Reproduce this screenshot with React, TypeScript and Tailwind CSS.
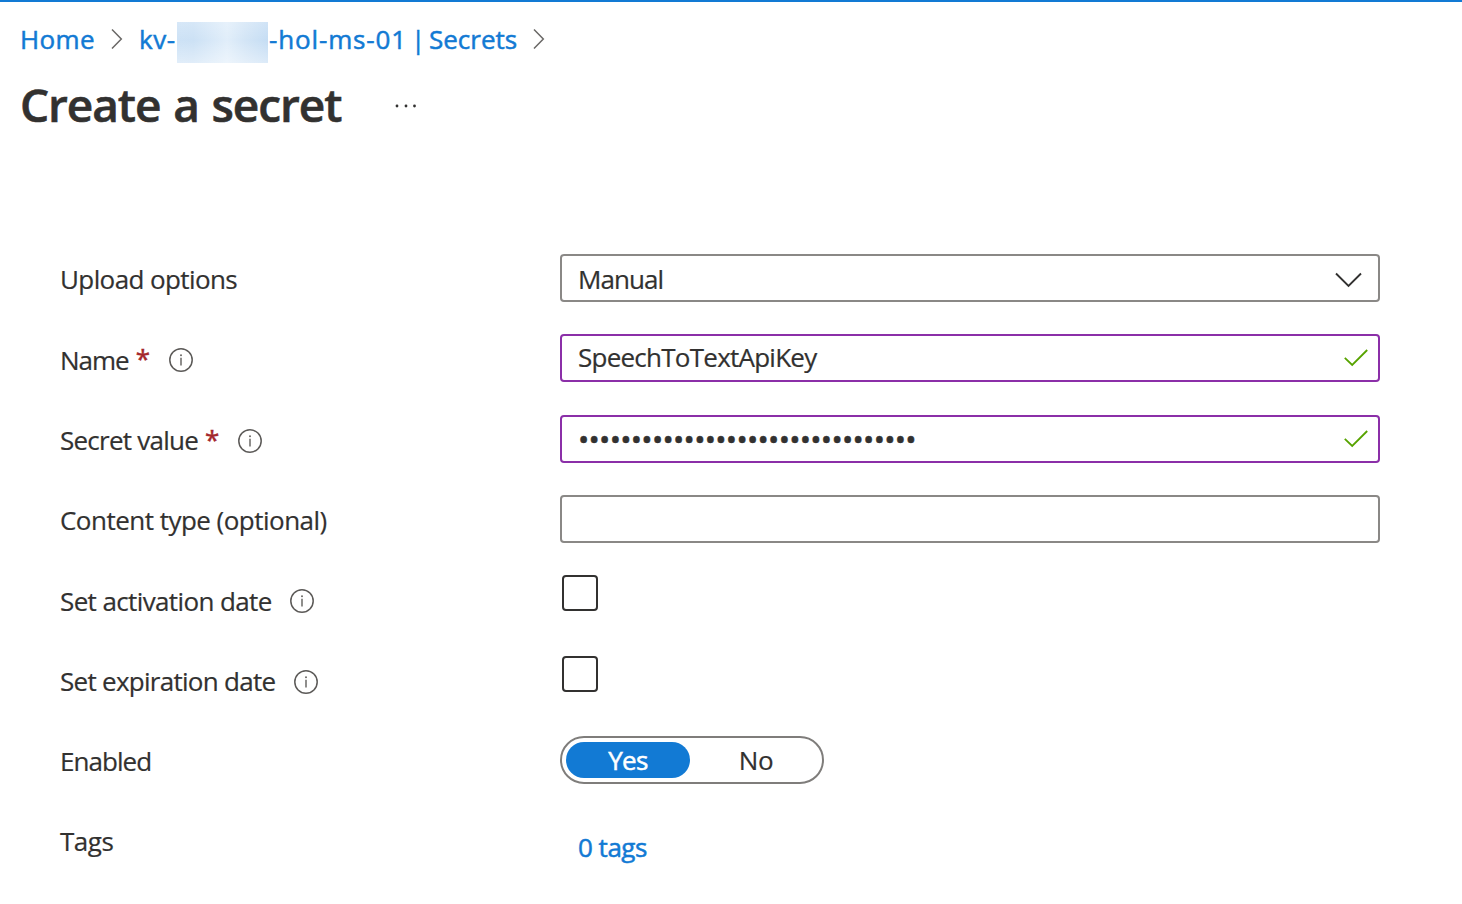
import type { ReactNode } from "react";

function ChevronRight() {
  return (
    <svg width="12" height="22" viewBox="0 0 12 22" fill="none" className="mb-0.5 shrink-0">
      <path d="M1 1.5 L10.3 11 L1 20.5" stroke="#6a6866" strokeWidth="1.5" />
    </svg>
  );
}

function Info() {
  return (
    <svg width="24" height="24" viewBox="0 0 24 24" fill="none" className="shrink-0">
      <circle cx="12" cy="12" r="11.2" stroke="#5c5a58" strokeWidth="1.5" />
      <path d="M12 9.8 V17.6" stroke="#6a6866" strokeWidth="1.5" />
      <circle cx="12" cy="7.2" r="1" fill="#6a6866" />
    </svg>
  );
}

function Check() {
  return (
    <svg width="24" height="18" viewBox="0 0 24 18" fill="none" className="shrink-0">
      <path d="M0.8 8.8 L8.2 16 L23.2 1" stroke="#57a300" strokeWidth="1.8" />
    </svg>
  );
}

function Row({ label, text, required, info, children }: {
  label: string;
  text: string;
  required?: boolean;
  info?: string;
  children: ReactNode;
}) {
  return (
    <div className="flex items-start">
      <div className="flex h-12 w-[500px] shrink-0 items-center">
        <span className={`leading-[46px] whitespace-pre ${text}`}>{label}</span>
        {required && <span className="pl-[7px] leading-[46px] text-[#a4262c] [-webkit-text-stroke:0.5px]">*</span>}
        {info && <span className={`pt-1 ${info}`}><Info /></span>}
      </div>
      {children}
    </div>
  );
}

const field = "flex h-12 w-[820px] items-center rounded-[4px] border-2 pl-4";

export default function App() {
  return (
    <div className="h-[904px] w-[1462px] overflow-hidden border-t-2 border-[#127ad4] bg-white font-['Open_Sans','Noto_Sans',sans-serif] text-[26px] text-[#323130] [-webkit-text-stroke:0.2px]">
      <nav className="flex h-[61px] items-center pt-[14px] pl-5 text-[#127ad4] [-webkit-text-stroke:0.5px]">
        <span className="w-[91px] tracking-[0.4px]">Home</span>
        <ChevronRight />
        <span className="ml-4 w-[38px] tracking-[0.5px]">kv-</span>
        <span className="mt-1.5 h-[41px] w-[91px] shrink-0 bg-[linear-gradient(180deg,#ffffff33_0%,#ffffff00_45%,#ffffff66_100%),linear-gradient(90deg,#cde2f6_0%,#cce1f5_18%,#e1eefa_55%,#d3e5f6_75%,#c5ddf4_100%)]" />
        <span className="flex w-[265px] pl-px whitespace-pre">
          <span className="w-[142px] tracking-[0.85px]">-hol-ms-01</span>
          <span className="w-[18px]">|</span>
          <span>Secrets</span>
        </span>
        <ChevronRight />
      </nav>
      <header className="flex h-[80px] items-center pt-[3px] pl-5">
        <h1 className="w-[375px] text-[46px] font-semibold whitespace-nowrap tracking-[-1.1px] [-webkit-text-stroke:0.6px] [word-spacing:2px]">Create a secret</h1>
        <svg width="22" height="4" viewBox="0 0 22 4" fill="#323130" className="mt-[3px]">
          <circle cx="2" cy="2" r="1.4" />
          <circle cx="11" cy="2" r="1.4" />
          <circle cx="19.5" cy="2" r="1.4" />
        </svg>
      </header>
      <main className="mt-[111px] grid grid-rows-[80px_81px_80px_80px_81px_80px_80px_48px] pl-[60px]">
        <Row label="Upload options" text="pt-0.5 tracking-[-0.6px]">
          <div className={`${field} justify-between border-[#8a8886] pr-4`}>
            <span className="pt-0.5 tracking-[-0.95px]">Manual</span>
            <svg width="27" height="16" viewBox="0 0 27 16" fill="none" className="mt-1">
              <path d="M1 1.5 L13.5 14 L26 1.5" stroke="#323130" strokeWidth="1.9" />
            </svg>
          </div>
        </Row>
        <Row label="Name" text="pt-1 tracking-[-1px]" required info="pl-[19px]">
          <div className={`${field} justify-between border-[#8b2fa8] pr-[10px]`}>
            <span className="pb-0.5 tracking-[-0.75px]">SpeechToTextApiKey</span>
            <Check />
          </div>
        </Row>
        <Row label="Secret value" text="pt-0.5 tracking-[-0.75px]" required info="pl-[19px]">
          <div className={`${field} justify-between border-[#8b2fa8] pr-[10px]`}>
            <span className="text-[30px] leading-10 tracking-[-0.72px] [-webkit-text-stroke:0.5px]">{"•".repeat(32)}</span>
            <Check />
          </div>
        </Row>
        <Row label="Content type (optional)" text="pt-0.5 tracking-[-0.52px]">
          <div className={`${field} border-[#8a8886]`} />
        </Row>
        <Row label="Set activation date" text="pt-1 tracking-[-0.62px]" info="pl-[18px]">
          <div className="ml-0.5 size-9 rounded-[4px] border-2 border-[#323130]" />
        </Row>
        <Row label="Set expiration date" text="pt-0.5 tracking-[-0.72px]" info="pl-[19px]">
          <div className="ml-0.5 size-9 rounded-[4px] border-2 border-[#323130]" />
        </Row>
        <Row label="Enabled" text="pt-0.5 tracking-[-0.95px]">
          <div className="flex h-12 w-[264px] items-center rounded-full border-2 border-[#7f7d7b] pl-1 leading-9">
            <span className="h-9 w-[124px] shrink-0 rounded-full bg-[#127ad4] text-center tracking-[-0.6px] text-white [-webkit-text-stroke:0.5px]">Yes</span>
            <span className="h-9 w-[132px] shrink-0 text-center tracking-[-0.3px]">No</span>
          </div>
        </Row>
        <Row label="Tags" text="pt-0.5 tracking-[-0.5px]">
          <span className="pt-3 pl-[18px] tracking-[-0.5px] text-[#127ad4] [-webkit-text-stroke:0.5px]">0 tags</span>
        </Row>
      </main>
    </div>
  );
}
